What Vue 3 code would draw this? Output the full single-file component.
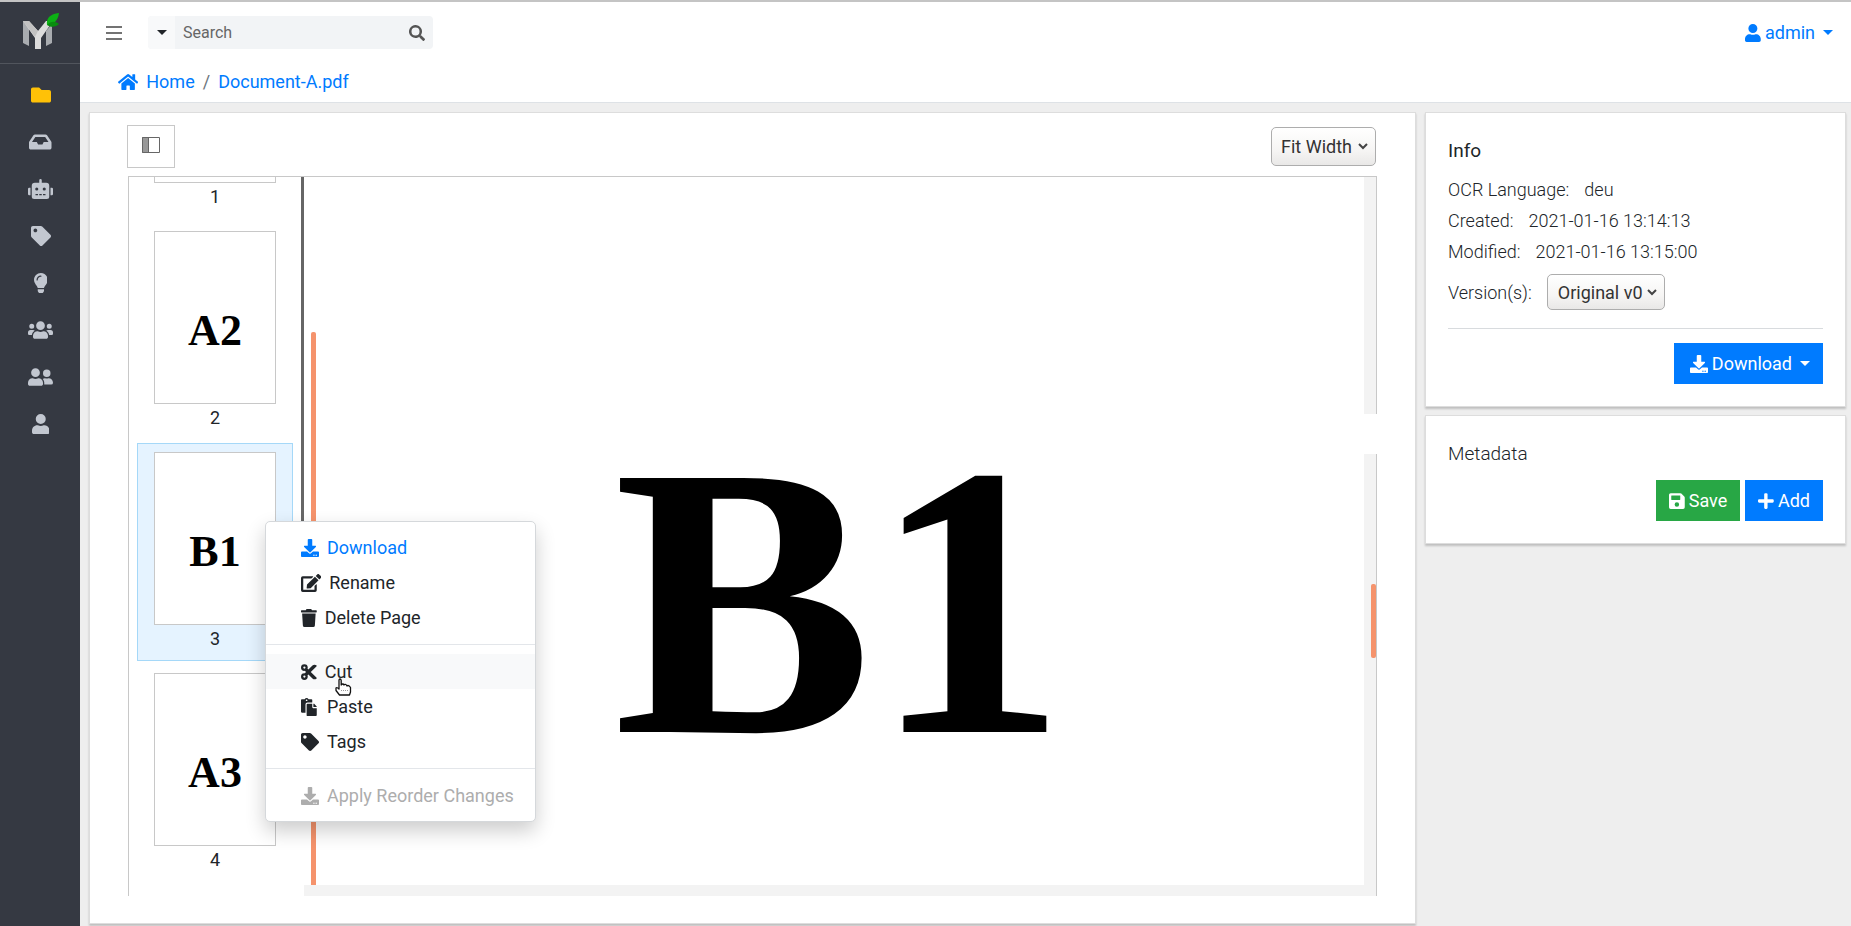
<script setup>
import { ref } from 'vue'

const P = {
  folder: ['0 0 512 512', 'M464 128H272l-64-64H48C21 64 0 85 0 112v288c0 27 21 48 48 48h416c27 0 48-21 48-48V176c0-27-21-48-48-48z'],
  inbox: ['0 0 576 512', 'M567.9 243.9L462.3 85.4A48 48 0 0 0 422.400 64H153.600a48 48 0 0 0-39.900 21.400L8.100 243.900A48 48 0 0 0 0 270.500V400c0 26.500 21.500 48 48 48h480c26.500 0 48-21.500 48-48V270.500a48 48 0 0 0-8.100-26.600zM162.300 128h251.400l85.300 128H376l-32 64H232l-32-64H77z'],
  robot: ['0 0 640 512', 'M32 224h32v192H32a32 32 0 0 1-32-32V256a32 32 0 0 1 32-32zm512-48v272a64 64 0 0 1-64 64H160a64 64 0 0 1-64-64V176a80 80 0 0 1 80-80h112V32a32 32 0 0 1 64 0v64h112a80 80 0 0 1 80 80zM264 256a40 40 0 1 0-80 0 40 40 0 0 0 80 0zm-8 128h-64v32h64zm96 0h-64v32h64zm104-128a40 40 0 1 0-80 0 40 40 0 0 0 80 0zm-8 128h-64v32h64zm192-128v128a32 32 0 0 1-32 32h-32V224h32a32 32 0 0 1 32 32z'],
  tag: ['0 0 512 512', 'M0 252.100V48C0 21.500 21.500 0 48 0h204.100a48 48 0 0 1 33.900 14.100l211.900 211.900c18.700 18.700 18.700 49.100 0 67.900L293.800 497.900c-18.700 18.700-49.100 18.700-67.900 0L14.100 286.100A48 48 0 0 1 0 252.100zM112 64c-26.500 0-48 21.500-48 48s21.500 48 48 48 48-21.500 48-48-21.500-48-48-48z'],
  bulb: ['0 0 352 512', 'M96 454.300V416h160v38.300a32 32 0 0 1-5 17l-17 26a32 32 0 0 1-27 14.700h-62a32 32 0 0 1-27-14.700l-17-26a32 32 0 0 1-5-17zM0 176C0 78 79 0 176 0s176 79 176 176c0 44-16 85-43 116-17 19-43 59-53 92H96c-10-33-36-73-53-92A175 175 0 0 1 0 176zm176-80a16 16 0 0 0 0-32C114 64 64 114 64 176a16 16 0 0 0 32 0c0-44 36-80 80-80z'],
  users: ['0 0 640 512', 'M96 224a64 64 0 1 0 0-128 64 64 0 0 0 0 128zm448 0a64 64 0 1 0 0-128 64 64 0 0 0 0 128zm32 32h-64c-18 0-34 7-45 19 40 22 69 62 75 109h66a32 32 0 0 0 32-32v-32a64 64 0 0 0-64-64zm-256 0a112 112 0 1 0 0-224 112 112 0 0 0 0 224zm77 32h-8a155 155 0 0 1-138 0h-8c-64 0-115 52-115 115v29c0 27 21 48 48 48h288c27 0 48-21 48-48v-29c0-63-52-115-115-115zm-224-13c-11-12-27-19-45-19H64a64 64 0 0 0-64 64v32a32 32 0 0 0 32 32h66c6-47 35-87 75-109z'],
  friends: ['0 0 640 512', 'M192 256a112 112 0 1 0 0-224 112 112 0 0 0 0 224zm77 32h-8a155 155 0 0 1-138 0h-8C51 288 0 340 0 403v29c0 27 21 48 48 48h288c27 0 48-21 48-48v-29c0-63-52-115-115-115zm211-32a96 96 0 1 0 0-192 96 96 0 0 0 0 192zm48 32h-4a125 125 0 0 1-88 0h-4c-20 0-39 6-56 16 25 27 40 62 40 102v38l-1 4h177a48 48 0 0 0 48-48c0-62-50-112-112-112z'],
  user: ['0 0 448 512', 'M224 256a128 128 0 1 0 0-256 128 128 0 0 0 0 256zm90 32h-17a174 174 0 0 1-146 0h-17C60 288 0 348 0 422v42c0 27 21 48 48 48h352c27 0 48-21 48-48v-42c0-74-60-134-134-134z'],
  search: ['0 0 512 512', 'M505 443L405 343c-5-5-11-7-17-7h-16a208 208 0 1 0-36 36v16c0 6 2 12 7 17l100 100c9 9 24 9 34 0l28-28c9-10 9-25 0-34zM208 336a128 128 0 1 1 0-256 128 128 0 0 1 0 256z'],
  home: ['0 0 576 512', 'M280 148L96 300v164a16 16 0 0 0 16 16h112a16 16 0 0 0 16-16v-96a16 16 0 0 1 16-16h64a16 16 0 0 1 16 16v96a16 16 0 0 0 16 16h112a16 16 0 0 0 16-16V300L296 148a12 12 0 0 0-16 0zm292 103l-84-69V44a12 12 0 0 0-12-12h-56a12 12 0 0 0-12 12v73l-90-74a48 48 0 0 0-61 0L4 251a12 12 0 0 0-1 17l25 31a12 12 0 0 0 17 2L280 107a12 12 0 0 1 16 0l235 194a12 12 0 0 0 17-2l25-31a12 12 0 0 0-1-17z'],
  download: ['0 0 512 512', 'M216 0h80c13 0 24 11 24 24v168h88c18 0 27 21 14 34L270 378c-8 7-20 7-28 0L90 226c-13-13-4-34 14-34h88V24c0-13 11-24 24-24zm296 376v112c0 13-11 24-24 24H24c-13 0-24-11-24-24V376c0-13 11-24 24-24h147l49 49c20 20 52 20 72 0l49-49h147c13 0 24 11 24 24zM388 464a20 20 0 1 0-40 0 20 20 0 0 0 40 0zm64 0a20 20 0 1 0-40 0 20 20 0 0 0 40 0z'],
  edit: ['0 0 576 512', 'M403 83l90 90c4 4 4 10 0 14L275 405l-93 10c-12 2-23-9-21-21l10-93L389 83c4-4 10-4 14 0zm162-23l-49-49a39 39 0 0 0-55 0l-35 36c-4 4-4 10 0 14l90 90c4 4 10 4 14 0l35-36a39 39 0 0 0 0-55zM384 346V448H64V128h230c3 0 6-1 9-4l40-40c7-7 2-20-9-20H48a48 48 0 0 0-48 48v352a48 48 0 0 0 48 48h352a48 48 0 0 0 48-48V306c0-11-13-16-20-9l-40 40c-3 3-4 6-4 9z'],
  trash: ['0 0 448 512', 'M432 32H312l-9-19A24 24 0 0 0 281 0H167a24 24 0 0 0-22 13l-9 19H16A16 16 0 0 0 0 48v32a16 16 0 0 0 16 16h416a16 16 0 0 0 16-16V48a16 16 0 0 0-16-16zM32 128l21 339a48 48 0 0 0 48 45h246a48 48 0 0 0 48-45l21-339z'],
  cut: ['0 0 448 512', 'M278 256L444.500 89.600c4.700-4.700 4.700-12.300 0-17-32.800-32.800-86-32.800-118.800 0L210.200 188.100l-24.900-24.900c4.300-10.900 6.700-22.800 6.700-35.200a96 96 0 1 0-96 96c4.500 0 9-.3 13.400-.9L142.300 256l-32.900 32.900c-4.400-.6-8.800-.9-13.400-.9a96 96 0 1 0 96 96c0-12.400-2.400-24.300-6.700-35.300l24.900-24.900L325.700 439.400c32.800 32.800 86 32.800 118.800 0 4.700-4.700 4.700-12.300 0-17zM96 160a32 32 0 1 1 0-64 32 32 0 0 1 0 64zm0 256a32 32 0 1 1 0-64 32 32 0 0 1 0 64z'],
  paste: ['0 0 512 512', 'M128 184c0-31 25-56 56-56h136V56a24 24 0 0 0-24-24h-81a64 64 0 0 0-110 0H24A24 24 0 0 0 0 56v336c0 13 11 24 24 24h104zm32-144a24 24 0 1 1 0 48 24 24 0 0 1 0-48zm184 248h104v200c0 13-11 24-24 24H184a24 24 0 0 1-24-24V184c0-13 11-24 24-24h136v104c0 13 11 24 24 24zm104-38v6h-96v-96h6c6 0 12 3 17 7l66 66c4 5 7 11 7 17z'],
  save: ['0 0 448 512', 'M434 130L350 46a48 48 0 0 0-34-14H48A48 48 0 0 0 0 80v352a48 48 0 0 0 48 48h352a48 48 0 0 0 48-48V164a48 48 0 0 0-14-34zM224 416a64 64 0 1 1 0-128 64 64 0 0 1 0 128zm96-304v100a12 12 0 0 1-12 12H76a12 12 0 0 1-12-12V108a12 12 0 0 1 12-12h229c3 0 6 1 8 3l4 4c2 2 3 6 3 9z'],
  plus: ['0 0 448 512', 'M416 208H272V64a32 32 0 0 0-32-32h-32a32 32 0 0 0-32 32v144H32a32 32 0 0 0-32 32v32a32 32 0 0 0 32 32h144v144a32 32 0 0 0 32 32h32a32 32 0 0 0 32-32V304h144a32 32 0 0 0 32-32v-32a32 32 0 0 0-32-32z']
}

const nav = [
  ['folder', 'Documents'], ['inbox', 'Inbox'], ['robot', 'Automates'], ['tag', 'Tags'],
  ['bulb', 'Logs'], ['users', 'Groups'], ['friends', 'Roles'], ['user', 'Users']
]
const pages = ['', 'A2', 'B1', 'A3']
const selected = ref(2)
const groups = [
  [['download', 'Download'], ['edit', 'Rename'], ['trash', 'Delete Page']],
  [['cut', 'Cut'], ['paste', 'Paste'], ['tag', 'Tags']],
  [['download', 'Apply Reorder Changes']]
]
const search = ref('')
</script>

<template>
  <div class="app">
    <nav class="sidebar" aria-label="Main">
      <a href="#" class="brand" aria-label="Start page">
        <svg width="38" height="38" viewBox="0 0 38 38">
          <path fill="#a9acb0" d="M2 9l6 7v18l-6-3zM31 12v19l-6 3V19z" />
          <path fill="#dcdcdc" d="M2 9h6l9 10 8-10h7L20 26v11h-6V26z" />
          <path fill="#c2c2c2" d="M2 9h6l9 10-3 6z" />
          <path fill="#0cb114" d="M38 1c-9 1-13 5-12 12 8-1 11-5 12-12z" />
          <path fill="#088c0e" d="M26 13c4-4 8-4 12-1-3 3-8 4-12 1z" />
        </svg>
      </a>
      <a v-for="([icon, label], i) in nav" :key="label" href="#" class="nav-item" :class="{ active: i === 0 }" :aria-label="label">
        <svg class="nav-icon" :viewBox="P[icon][0]"><path :d="P[icon][1]" /></svg>
      </a>
    </nav>

    <div class="page">
      <header class="header">
        <div class="toolbar">
          <button class="burger" aria-label="Toggle menu"><i></i><i></i><i></i></button>
          <form class="search" @submit.prevent>
            <button type="button" class="scope" aria-label="Search options"><span class="caret"></span></button>
            <input v-model="search" type="text" placeholder="Search" aria-label="Search" />
            <button class="go" aria-label="Run search"><svg class="ic" :viewBox="P.search[0]"><path :d="P.search[1]" /></svg></button>
          </form>
          <a href="#" class="account"><svg class="ic" :viewBox="P.user[0]"><path :d="P.user[1]" /></svg>admin<span class="caret"></span></a>
        </div>
        <div class="crumbs">
          <svg class="ic" :viewBox="P.home[0]"><path :d="P.home[1]" /></svg>
          <a href="#">Home</a><span class="sep">/</span><a href="#">Document-A.pdf</a>
        </div>
      </header>

      <main class="content">
        <section class="card viewer-card">
          <div class="viewer-bar">
            <button class="panel-toggle" aria-label="Toggle thumbnails">
              <svg width="18" height="16" viewBox="0 0 18 16"><path fill="#999" d="M0 0h6v16H0z" /><path fill="none" stroke="#666" d="M.5.5h17v15H.5zM6.500.500v15" /></svg>
            </button>
            <span class="select zoom-select">
              <select aria-label="Zoom"><option>Fit Width</option></select>
              <svg width="10" height="7" viewBox="0 0 10 7"><path d="M1 1l4 4 4-4" /></svg>
            </span>
          </div>
          <div class="viewer">
            <div class="thumbs">
              <figure v-for="(p, i) in pages" :key="i" class="thumb" :class="{ selected: i === selected }" @click="selected = i">
                <div class="sheet">{{ p }}</div>
                <figcaption>{{ i + 1 }}</figcaption>
              </figure>
            </div>
            <div class="splitter"></div>
            <div class="canvas">
              <div class="document">
                <div class="mark left-mark"></div>
                <div class="big">B1</div>
              </div>
              <div class="track">
                <div class="seg first"></div>
                <div class="seg second"><div class="mark right-mark"></div></div>
              </div>
              <div class="track-h"></div>
            </div>
          </div>
        </section>

        <aside class="side">
          <section class="card info">
            <h2>Info</h2>
            <dl>
              <div><dt>OCR Language:</dt><dd>deu</dd></div>
              <div><dt>Created:</dt><dd>2021-01-16 13:14:13</dd></div>
              <div><dt>Modified:</dt><dd>2021-01-16 13:15:00</dd></div>
            </dl>
            <div class="version">
              <label for="version">Version(s):</label>
              <span class="select">
                <select id="version"><option>Original v0</option></select>
                <svg width="10" height="7" viewBox="0 0 10 7"><path d="M1 1l4 4 4-4" /></svg>
              </span>
            </div>
            <hr />
            <div class="actions">
              <button class="btn download"><svg class="ic" :viewBox="P.download[0]"><path :d="P.download[1]" /></svg>Download<span class="caret"></span></button>
            </div>
          </section>
          <section class="card metadata">
            <h2 class="light">Metadata</h2>
            <div class="actions">
              <button class="btn green"><svg class="ic" :viewBox="P.save[0]"><path :d="P.save[1]" /></svg>Save</button>
              <button class="btn"><svg class="ic" :viewBox="P.plus[0]"><path :d="P.plus[1]" /></svg>Add</button>
            </div>
          </section>
        </aside>
      </main>
    </div>

    <div class="menu" role="menu">
      <div v-for="(g, gi) in groups" :key="gi" class="menu-group">
        <button v-for="[icon, label] in g" :key="label" role="menuitem" class="menu-item"
          :class="{ primary: label === 'Download', hover: label === 'Cut' }" :disabled="gi === 2">
          <svg class="ic" :viewBox="P[icon][0]"><path :d="P[icon][1]" /></svg>{{ label }}
        </button>
      </div>
      <svg class="pointer" width="18" height="18" viewBox="0 0 18 18">
        <path fill="#fff" stroke="#111" stroke-width="1.300" stroke-linejoin="round" d="M4 11V2.500Q4 1 5 1t1.200 1.500V7q.3-1 1.400-1T9 7q.4-.8 1.400-.6T12 8q.5-.7 1.500-.4T15.500 9.500V14l-1 3H4.500L1 12.500V10q1-1 3 1z" />
        <path stroke="#999" stroke-dasharray="1 1" d="M6 12.500h7" />
      </svg>
    </div>
  </div>
</template>

<style>
html, body { margin: 0; background: #eee; }
</style>

<style scoped>
* { box-sizing: border-box; }
.app { display: flex; height: 100vh; min-height: 600px; border-top: 2px solid #c4c4c4; position: relative; font: 18px/27px Roboto, "Liberation Sans", sans-serif; color: #212529; }
a { color: #007bff; text-decoration: none; }
button, input, select { font: inherit; color: inherit; border: 0; margin: 0; padding: 0; background: none; border-radius: 0; cursor: pointer; }
svg { display: block; flex: none; }
.ic { height: 18px; width: auto; fill: currentColor; }
.caret { border: 5px solid transparent; border-top-color: currentColor; border-bottom: 0; flex: none; }
.sidebar { width: 80px; flex: none; background: #353942; display: flex; flex-direction: column; }
.brand { height: 62px; border-bottom: 1px solid #51555d; display: flex; justify-content: center; padding-top: 10px; margin-bottom: 7px; }
.nav-item { height: 47px; display: flex; align-items: center; justify-content: center; padding-left: 1px; }
.nav-icon { height: 20px; fill: #c2c7d0; }
.active .nav-icon { fill: #ffc107; }
.page { flex: 1; min-width: 0; display: flex; flex-direction: column; }
.header { background: #fff; border-bottom: 1px solid #dee2e6; height: 101px; flex: none; }
.toolbar { display: flex; align-items: center; height: 61px; padding: 0 18px 0 26px; }
.burger { width: 16px; display: flex; flex-direction: column; gap: 4px; margin-right: 26px; }
.burger i { height: 2px; background: #737373; }
.search { display: flex; width: 285px; height: 33px; background: #f2f4f6; border-radius: 4px; overflow: hidden; font-size: 16px; }
.scope { width: 27px; background: #f8f9fa; display: flex; align-items: center; justify-content: center; }
.search input { flex: 1; min-width: 0; padding: 0 8px; outline: 0; cursor: text; }
.search input::placeholder { color: #666; opacity: 1; }
.go { width: 33px; color: #555; display: flex; align-items: center; justify-content: center; }
.go .ic { height: 16px; }
.account { margin-left: auto; display: flex; align-items: center; gap: 4px; }
.account .caret { margin-left: 4px; }
.crumbs { display: flex; align-items: center; padding-left: 38px; height: 37px; }
.crumbs .ic { color: #007bff; margin-right: 8px; }
.sep { color: #6c757d; margin: 0 8px; }
.content { flex: 1; min-height: 0; display: flex; gap: 9px; padding: 9px 5px 2px 9px; }
.card { background: #fff; border: 1px solid #ddd; box-shadow: 0 2px 2px rgba(0, 0, 0, .2); }
.viewer-card { flex: 1; min-width: 0; padding: 12px 38px 27px 37px; display: flex; flex-direction: column; }
.viewer-bar { display: flex; justify-content: space-between; align-items: flex-start; height: 51px; flex: none; }
.panel-toggle { width: 48px; height: 43px; border: 1px solid #c8c8c8; display: flex; justify-content: center; padding-top: 11px; }
.select { display: inline-grid; align-items: center; border: 1px solid #adadad; border-radius: 5px; background: linear-gradient(#fff, #f6f5f4 60%, #e9e8e7); height: 36px; }
.select > * { grid-area: 1 / 1; }
.select select { appearance: none; height: 100%; padding: 0 21px 0 10px; color: #333; outline: 0; }
.select svg { justify-self: end; margin-right: 7px; pointer-events: none; fill: none; stroke: #444; stroke-width: 2; }
.zoom-select { margin-top: 2px; height: 39px; margin-right: 1px; }
.zoom-select select { padding: 0 23px 0 9px; }
.viewer { flex: 1; min-height: 0; display: flex; margin-left: 1px; border-top: 1px solid #c8c8c8; border-left: 1px solid #c8c8c8; }
.thumbs { width: 172px; flex: none; overflow: hidden; display: flex; flex-direction: column; justify-content: flex-end; gap: 3px; padding: 0 8px 14px; }
.thumb { margin: 0; height: 218px; flex: none; border: 1px solid transparent; display: flex; flex-direction: column; align-items: center; padding-top: 8px; }
.thumb.selected { background: #e5f3ff; border-color: #a5d8f8; }
.sheet { width: 122px; height: 173px; flex: none; border: 1px solid #c8c8c8; background: #fff; color: #000; font: bold 44px/50px "Liberation Serif", "Times New Roman", serif; text-align: center; padding-top: 74px; }
.splitter { width: 3px; background: #666; margin-bottom: 120px; flex: none; }
.canvas { flex: 1; min-width: 0; display: grid; grid-template: 1fr 11px / 1fr 13px; }
.document { min-width: 0; min-height: 0; overflow: hidden; padding-left: 7px; display: flex; align-items: stretch; }
.mark { background: #f5936c; width: 5px; }
.left-mark { margin-top: 155px; border-radius: 2px 2px 0 0; flex: none; }
.big { flex: 1; color: #000; font: bold 388px/388px "Liberation Serif", "Times New Roman", serif; text-align: center; padding-top: 230px; }
.track { display: flex; flex-direction: column; gap: 40px; grid-row: 1 / 3; grid-column: 2; }
.seg { background: #f3f3f3; border-right: 1px solid #c8c8c8; display: flex; justify-content: flex-end; }
.first { height: 237px; }
.second { flex: 1; padding-top: 130px; }
.right-mark { height: 74px; border-radius: 2px; }
.track-h { background: #f3f3f3; grid-area: 2 / 1; }
.side { width: 421px; flex: none; display: flex; flex-direction: column; gap: 8px; }
.side .card { padding: 24px 22px 22px; }
h2 { font-size: 19px; line-height: 27px; font-weight: 400; margin: 0; }
.light, dl, label { font-weight: 300; }
dl { margin: 10px 0 0; }
dl div { display: flex; gap: 15px; height: 31px; align-items: center; }
dd { margin: 0; }
.version { display: flex; align-items: center; gap: 15px; margin-top: 7px; }
hr { border: 0; border-top: 1px solid #d8dbde; margin: 18px 0 14px; }
.actions { display: flex; justify-content: flex-end; gap: 5px; }
.btn { height: 41px; padding: 0 13px; background: #007bff; color: #fff; display: flex; align-items: center; gap: 4px; }
.download { padding: 0 13px 0 16px; }
.download .caret { margin-left: 4px; }
.green { background: #28a745; }
.metadata .actions { margin-top: 13px; }
.menu { position: absolute; left: 265px; top: 519px; width: 271px; background: #fff; border: 1px solid #d5d8db; border-radius: 5px; box-shadow: 0 9px 20px rgba(0, 0, 0, .2); padding: 8px 0; }
.menu-group + .menu-group { border-top: 1px solid #e3e6ea; margin-top: 9px; padding-top: 9px; }
.menu-item { display: flex; align-items: center; gap: 8px; width: 100%; height: 35px; padding-left: 35px; text-align: left; }
.menu-item.primary { color: #007bff; }
.menu-item.hover { background: #f8f9fa; }
.menu-item:disabled { color: #adadad; }
.pointer { position: absolute; left: 69px; top: 156px; }
</style>
